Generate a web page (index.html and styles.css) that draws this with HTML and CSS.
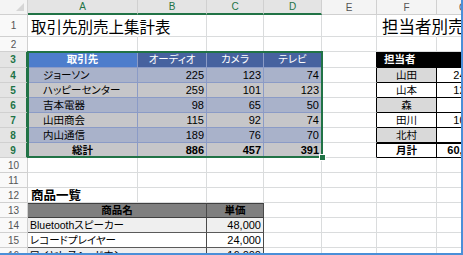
FILE: index.html
```html
<!DOCTYPE html>
<html lang="ja">
<head>
<meta charset="utf-8">
<title>Sheet</title>
<link rel="stylesheet" href="styles.css">
</head>
<body>
<div class="frame">
<div class="sheet">
  <div class="corner"><i class="tri"></i></div>
  <div class="ch on">A</div><div class="ch on">B</div><div class="ch on">C</div><div class="ch on">D</div><div class="ch">E</div><div class="ch">F</div><div class="ch">G</div>

  <div class="rh">1</div>
  <div class="c title nob">取引先別売上集計表</div><div class="c"></div><div class="c"></div><div class="c"></div><div class="c"></div><div class="c title2 nob">担当者別売上表</div><div class="c"></div>

  <div class="rh">2</div>
  <div class="c"></div><div class="c"></div><div class="c"></div><div class="c"></div><div class="c"></div><div class="c"></div><div class="c"></div>

  <div class="rh on">3</div>
  <div class="c tb tha">取引先</div><div class="c tb th">オーディオ</div><div class="c tb th">カメラ</div><div class="c tb th">テレビ</div><div class="c edge"></div><div class="c rt blk pl">担当者</div><div class="c rt blk"></div>

  <div class="rh on">4</div>
  <div class="c tb b1 nm">ジョーソン</div><div class="c tb b1 n">225</div><div class="c tb b1 n">123</div><div class="c tb b1 n">74</div><div class="c edge"></div><div class="c rt gr ctr">山田</div><div class="c rt n">24,000</div>

  <div class="rh on">5</div>
  <div class="c tb b2 nm">ハッピーセンター</div><div class="c tb b2 n">259</div><div class="c tb b2 n">101</div><div class="c tb b2 n">123</div><div class="c edge"></div><div class="c rt ctr">山本</div><div class="c rt n">12,000</div>

  <div class="rh on">6</div>
  <div class="c tb b1 nm">吉本電器</div><div class="c tb b1 n">98</div><div class="c tb b1 n">65</div><div class="c tb b1 n">50</div><div class="c edge"></div><div class="c rt gr ctr">森</div><div class="c rt n"></div>

  <div class="rh on">7</div>
  <div class="c tb b2 nm">山田商会</div><div class="c tb b2 n">115</div><div class="c tb b2 n">92</div><div class="c tb b2 n">74</div><div class="c edge"></div><div class="c rt ctr">田川</div><div class="c rt n">10,000</div>

  <div class="rh on">8</div>
  <div class="c tb b1 nm">内山通信</div><div class="c tb b1 n">189</div><div class="c tb b1 n">76</div><div class="c tb b1 n">70</div><div class="c edge"></div><div class="c rt gr ctr">北村</div><div class="c rt n"></div>

  <div class="rh on">9</div>
  <div class="c tb b2 ctr bold">総計</div><div class="c tb b2 n bold">886</div><div class="c tb b2 n bold">457</div><div class="c tb b2 n bold">391</div><div class="c edge"></div><div class="c rt tot ctr bold">月計</div><div class="c rt tot n bold gt">60,000</div>

  <div class="rh">10</div>
  <div class="c"></div><div class="c"></div><div class="c"></div><div class="c"></div><div class="c"></div><div class="c"></div><div class="c"></div>

  <div class="rh">11</div>
  <div class="c"></div><div class="c"></div><div class="c"></div><div class="c"></div><div class="c"></div><div class="c"></div><div class="c"></div>

  <div class="rh">12</div>
  <div class="c sub">商品一覧</div><div class="c"></div><div class="c"></div><div class="c"></div><div class="c"></div><div class="c"></div><div class="c"></div>

  <div class="rh">13</div>
  <div class="c lt lh span2">商品名</div><div class="c lt lh">単価</div><div class="c"></div><div class="c"></div><div class="c"></div><div class="c"></div>

  <div class="rh">14</div>
  <div class="c lt lg span2">Bluetoothスピーカー</div><div class="c lt lg n">48,000</div><div class="c"></div><div class="c"></div><div class="c"></div><div class="c"></div>

  <div class="rh">15</div>
  <div class="c lt span2">レコードプレイヤー</div><div class="c lt n">24,000</div><div class="c"></div><div class="c"></div><div class="c"></div><div class="c"></div>

  <div class="rh">16</div>
  <div class="c lt lg span2">ワイヤレスヘッドホン</div><div class="c lt lg n">16,000</div><div class="c"></div><div class="c"></div><div class="c"></div><div class="c"></div>

  <div class="sel"><span class="handle"></span></div>
</div>
</div>
</body>
</html>
```

FILE: styles.css
```css
html, body {
  margin: 0;
  padding: 0;
  background: #ffffff;
}

.frame {
  width: 461px;
  height: 253px;
  border-right: 2px solid #4a8fd8;
  border-bottom: 2px solid #4a8fd8;
  overflow: hidden;
  position: relative;
  background: #ffffff;
}

.sheet {
  position: relative;
  display: grid;
  grid-template-columns: 28px 110px 69px 57px 58px 55px 60px 53px;
  grid-template-rows: 15px 22px 15px 16px repeat(13, 15px);
  width: 490px;
  font-family: "Liberation Sans", "Noto Sans CJK JP", sans-serif;
  font-size: 10.5px;
  font-feature-settings: "palt";
  color: #000000;
}

.corner,
.ch,
.rh,
.c {
  box-sizing: border-box;
  border-right: 1px solid #dadcdd;
  border-bottom: 1px solid #dadcdd;
  display: flex;
  align-items: center;
  white-space: nowrap;
  padding: 0 2px;
  min-width: 0;
  line-height: 13px;
}

/* headers */
.corner {
  position: relative;
  background: #f4f4f4;
  border-color: #d0d0d0;
}
.tri {
  position: absolute;
  right: 3px;
  bottom: 3px;
  width: 0;
  height: 0;
  border-left: 8px solid transparent;
  border-bottom: 8px solid #d6d6d6;
}
.ch {
  justify-content: center;
  background: #f4f4f4;
  border-color: #d0d0d0;
  color: #555555;
  font-size: 10px;
}
.ch.on {
  background: #e4e4e4;
  color: #217346;
  border-bottom: 2px solid #217346;
}
.rh {
  justify-content: center;
  background: #f9f9f9;
  border-color: #d0d0d0;
  color: #555555;
  font-size: 10px;
  padding: 0;
}
.rh.on {
  background: #e4e4e4;
  color: #217346;
  font-weight: bold;
  border-right: 2px solid #217346;
}

.nob {
  border-right-color: transparent;
}

/* titles */
.title {
  align-items: flex-end;
  font-family: "Noto Sans CJK JP", sans-serif;
  font-feature-settings: normal;
  font-size: 15.5px;
  line-height: 18px;
  padding: 0 0 1px 3px;
}
.title2 {
  align-items: flex-end;
  font-family: "Noto Sans CJK JP", sans-serif;
  font-feature-settings: normal;
  font-size: 16.5px;
  line-height: 18px;
  padding: 0 0 1px 5px;
}
.sub {
  align-items: flex-end;
  font-family: "Noto Sans CJK JP", sans-serif;
  font-size: 12.5px;
  font-weight: bold;
  line-height: 14px;
  padding: 0 0 0 3px;
}

/* main table */
.tb {
  border-right-color: #8b9bc6;
  border-bottom-color: #8b9bc6;
}
.tha {
  background: #4d7dcc;
  color: #ffffff;
  font-weight: bold;
  justify-content: center;
}
.th {
  background: #46629f;
  color: #ffffff;
  justify-content: center;
}
.b1 {
  background: #a9b2ca;
}
.b2 {
  background: #c6c6c9;
}
.nm {
  padding-left: 15px;
}
.n {
  justify-content: flex-end;
  font-family: "Liberation Sans", sans-serif;
  font-size: 11px;
  padding-right: 2px;
}
.ctr {
  justify-content: center;
}
.bold {
  font-weight: bold;
}

/* right table */
.edge {
  border-right-color: #000000;
}
.rt {
  border-right-color: #000000;
  border-bottom-color: #000000;
}
.blk {
  background: #000000;
  color: #ffffff;
  font-weight: bold;
}
.pl {
  padding-left: 7px;
}
.gr {
  background: #d9d9d9;
}
.tot {
  border-top: 1px solid #000000;
}
.gt {
  padding-right: 8px;
}

/* lower table */
.span2 {
  grid-column: span 2;
}
.lt {
  border-right-color: #4a4a4a;
  border-bottom-color: #5a5a5a;
}
.lh {
  background: #7f7f7f;
  border-top: 1px solid #404040;
  border-bottom-color: #404040;
  font-weight: bold;
  justify-content: center;
}
.lg {
  background: #efefef;
}

/* selection */
.sel {
  position: absolute;
  left: 27px;
  top: 51px;
  width: 296px;
  height: 107px;
  box-sizing: border-box;
  border: 2px solid #217346;
  pointer-events: none;
}
.handle {
  position: absolute;
  right: -5px;
  bottom: -5px;
  width: 5px;
  height: 5px;
  background: #217346;
  border: 1px solid #ffffff;
}
```
